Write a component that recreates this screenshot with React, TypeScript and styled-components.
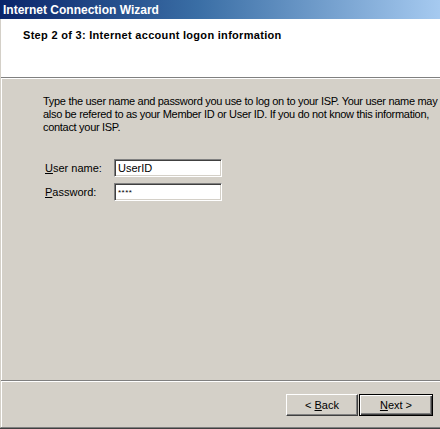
import React from 'react';
import styled, { createGlobalStyle } from 'styled-components';

const GlobalStyle = createGlobalStyle`
  html, body {
    margin: 0;
    padding: 0;
    background: #d4d0c8;
  }
  body {
    font-family: 'Liberation Sans', Arial, sans-serif;
    font-size: 11px;
    color: #000;
  }
`;

const WizardWindow = styled.div`
  width: 440px;
  height: 429px;
  display: flex;
  flex-direction: column;
  background: #d4d0c8;
  box-sizing: border-box;
  border-bottom: 1px solid #404040;
  overflow: hidden;
`;

const TitleBar = styled.div`
  height: 19px;
  flex-shrink: 0;
  display: flex;
  align-items: center;
  padding-left: 3px;
  background: linear-gradient(90deg, #0a246a 0%, #3a6ea5 45%, #a6caf0 100%);
  color: #fff;
  font-weight: bold;
  font-size: 12px;
`;

const Frame = styled.div`
  flex: 1;
  display: flex;
  flex-direction: column;
  border-left: 1px solid #d4d0c8;
  border-bottom: 1px solid #808080;
`;

const Inner = styled.div`
  flex: 1;
  display: flex;
  flex-direction: column;
  border-left: 1px solid #fff;
`;

const Header = styled.div`
  height: 58px;
  flex-shrink: 0;
  background: #fff;
  margin-left: -1px;
  padding: 10px 0 0 22px;
  box-sizing: border-box;
`;

const HeaderTitle = styled.div`
  font-weight: bold;
  font-size: 11px;
  line-height: 13px;
  letter-spacing: 0.3px;
`;

const Separator = styled.div`
  height: 1px;
  flex-shrink: 0;
  background: #808080;
  border-bottom: 1px solid #fff;
  margin-left: -1px;
`;

const Body = styled.div`
  flex: 1;
  padding: 16px 0 0 41px;
  display: flex;
  flex-direction: column;
`;

const Intro = styled.p`
  margin: 0;
  font-size: 11px;
  line-height: 13px;
  letter-spacing: -0.3px;
  white-space: nowrap;
`;

const Form = styled.div`
  margin-top: 25px;
  display: grid;
  grid-template-columns: 71px 108px;
  row-gap: 6px;
  align-items: center;
`;

const Label = styled.label`
  font-size: 11px;
  padding-left: 2px;
`;

const Field = styled.div<{ small?: boolean }>`
  height: 18px;
  box-sizing: border-box;
  background: #fff;
  border-top: 1px solid #808080;
  border-left: 1px solid #808080;
  border-right: 1px solid #fff;
  border-bottom: 1px solid #fff;
  box-shadow: inset 1px 1px 0 #404040, inset -1px -1px 0 #d4d0c8;
  padding: 0 3px;
  display: flex;
  align-items: center;
  font-size: ${(p) => (p.small ? '8px' : '11px')};
  letter-spacing: ${(p) => (p.small ? '0.5px' : '0')};
`;

const Footer = styled.div`
  height: 45px;
  flex-shrink: 0;
  display: flex;
  justify-content: flex-end;
  align-items: flex-start;
  padding: 12px 7px 0 0;
  box-sizing: border-box;
  gap: 1px;
`;

const Button = styled.button<{ isDefault?: boolean }>`
  width: ${(p) => (p.isDefault ? '74px' : '72px')};
  height: 22px;
  box-sizing: border-box;
  background: #d4d0c8;
  font-family: 'Liberation Sans', Arial, sans-serif;
  font-size: 11px;
  color: #000;
  padding: 0;
  border-top: 1px solid ${(p) => (p.isDefault ? '#000' : '#fff')};
  border-left: 1px solid ${(p) => (p.isDefault ? '#000' : '#fff')};
  border-right: 1px solid ${(p) => (p.isDefault ? '#000' : '#404040')};
  border-bottom: 1px solid ${(p) => (p.isDefault ? '#000' : '#404040')};
  box-shadow: ${(p) =>
    p.isDefault
      ? 'inset 1px 1px 0 #fff, inset -1px -1px 0 #404040, inset -2px -2px 0 #808080'
      : 'inset -1px -1px 0 #808080'};
`;

const Key = styled.span`
  text-decoration: underline;
`;

export default function App() {
  return (
    <>
      <GlobalStyle />
      <WizardWindow>
        <TitleBar>Internet Connection Wizard</TitleBar>
        <Frame>
          <Inner>
            <Header>
              <HeaderTitle>Step 2 of 3: Internet account logon information</HeaderTitle>
            </Header>
            <Separator />
            <Body>
              <Intro>
                Type the user name and password you use to log on to your ISP. Your user name may
                <br />
                also be refered to as your Member ID or User ID. If you do not know this information,
                <br />
                contact your ISP.
              </Intro>
              <Form>
                <Label>
                  <Key>U</Key>ser name:
                </Label>
                <Field>UserID</Field>
                <Label>
                  <Key>P</Key>assword:
                </Label>
                <Field small>****</Field>
              </Form>
            </Body>
            <Separator />
            <Footer>
              <Button>
                &lt; <Key>B</Key>ack
              </Button>
              <Button isDefault>
                <Key>N</Key>ext &gt;
              </Button>
            </Footer>
          </Inner>
        </Frame>
      </WizardWindow>
    </>
  );
}
